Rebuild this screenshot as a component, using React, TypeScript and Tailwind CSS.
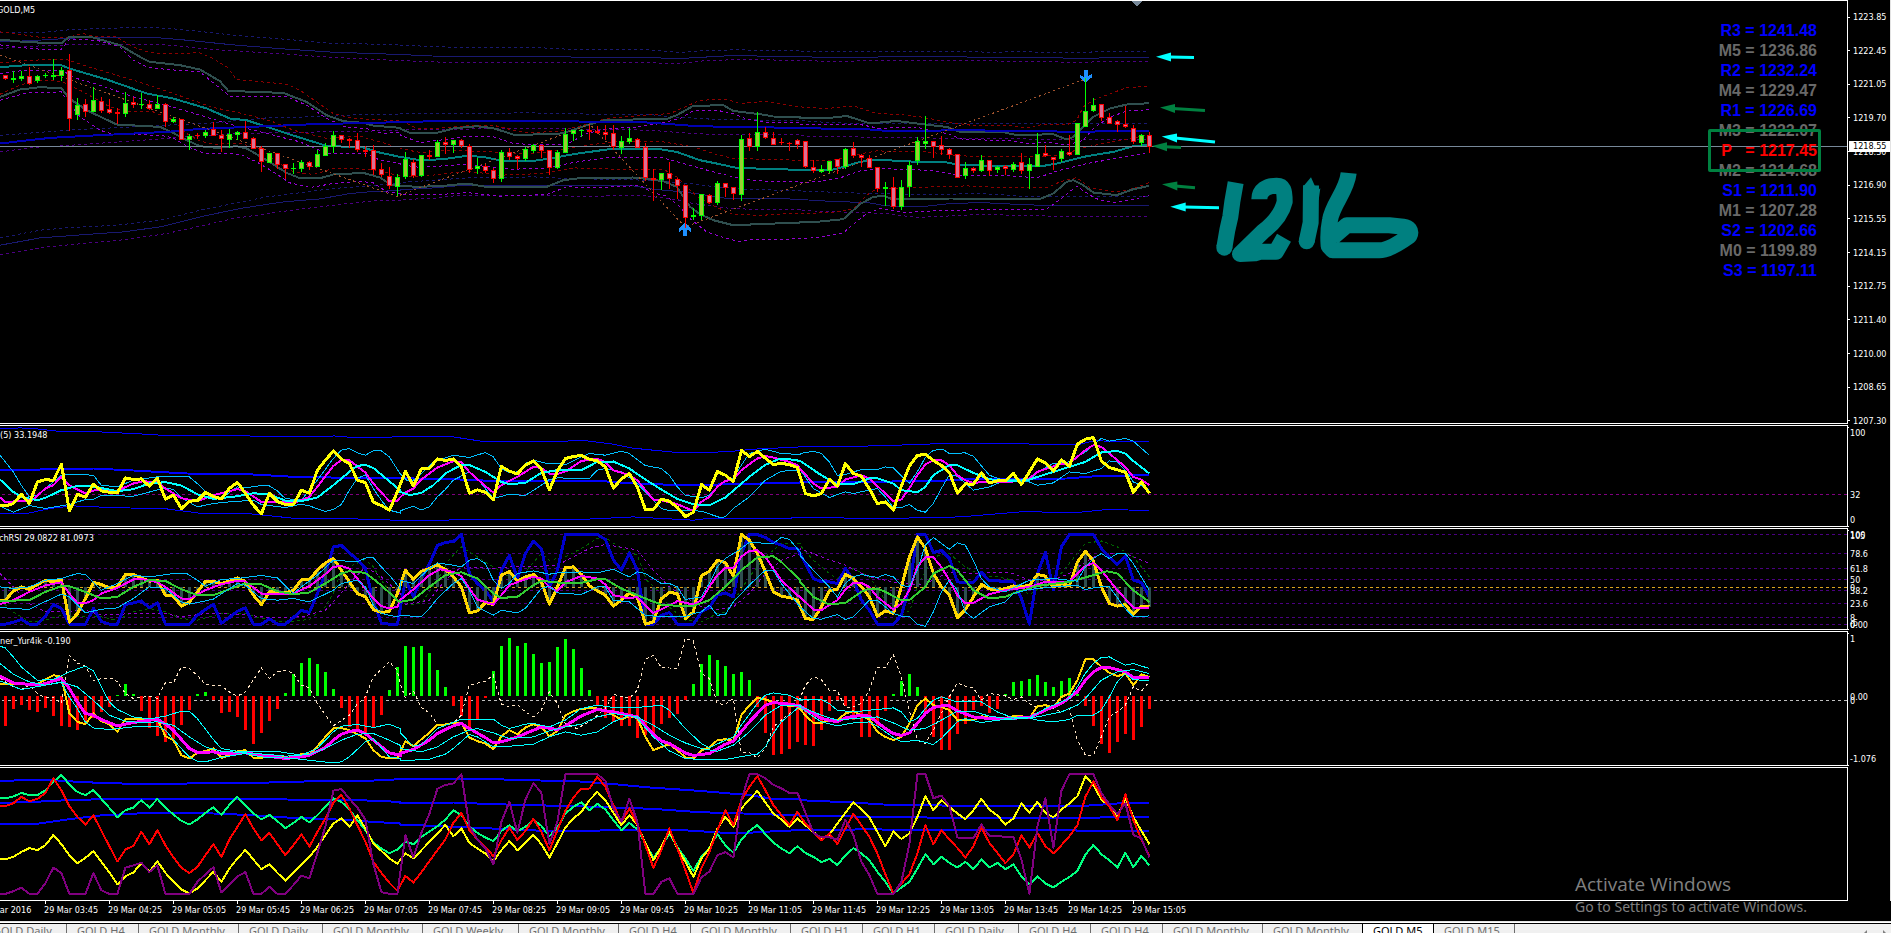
import type { ReactNode } from "react";

/* ------------------------------------------------------------------ data */

const BAR_STEP = 8;
const FIRST_BAR = 5;
const barX = (i: number) => FIRST_BAR + i * BAR_STEP;

/* Candles: direction, high, body top, body bottom, low. */
const CANDLES = `
r75,75,79,80 g71,78,80,83 g71,76,79,81 r67,76,84,85 g75,76,81,83 g73,75,76,78 g59,75,77,80 g67,70,76,81
r54,70,119,131 g98,105,115,120 r99,104,112,117 g87,100,112,112 r97,101,111,113 r99,109,113,114 r108,112,114,124
g92,103,114,117 r97,102,105,108 g93,104,105,109 r100,104,109,110 g95,104,109,109 r103,104,122,127 g117,119,122,123
r119,119,140,140 g134,136,140,150 r133,135,136,139 g130,132,136,138 r122,129,136,136 r130,135,139,152
g129,134,140,148 g131,132,135,140 r121,132,139,139 r137,138,149,149 r146,148,162,172 g153,153,163,163
r153,153,165,169 r164,164,169,179 g163,168,169,174 g160,162,169,172 r161,162,167,170 g150,154,167,167
g143,146,156,156 g131,135,147,153 r135,135,140,143 r138,139,141,148 r133,140,150,152 r146,150,152,157
r145,150,170,175 r163,169,175,177 r167,176,186,189 g174,177,187,196 g152,159,177,179 r159,162,176,178
g155,155,176,177 r150,155,157,160 g140,142,157,157 r137,142,145,154 g140,140,145,153 r139,140,146,148
r144,146,170,173 g158,166,169,174 r164,166,171,173 r168,170,179,183 g150,152,179,182 r148,152,157,160
r155,156,159,169 g147,149,159,161 g144,145,151,153 r145,145,151,158 r150,150,168,175 g150,152,168,169
g128,134,153,153 g130,130,134,141 g129,130,131,137 r125,130,132,140 r126,131,133,134 r125,132,135,140
r125,133,147,150 g136,141,148,154 g128,138,142,144 r138,139,148,148 r143,147,178,181 r169,178,180,201
g173,173,180,190 r162,173,179,189 r178,179,186,199 r185,185,218,228 g208,215,217,220 g194,194,216,220
r194,195,203,204 g181,183,203,205 r183,183,188,197 r187,187,194,200 g135,139,195,201 r133,138,147,151
g112,132,147,151 r127,132,138,139 r132,138,145,145 r138,142,143,145 r142,143,144,151 r139,140,145,149
r141,141,167,168 r160,167,171,173 g165,169,172,173 g161,161,171,173 r159,159,167,174 g148,149,167,169
r142,148,156,158 r154,155,158,167 r155,158,168,168 r167,167,189,192 g182,187,189,206 r177,187,207,209
g180,187,207,210 g161,165,187,197 g137,141,161,165 g116,141,144,149 r141,141,147,158 r136,145,150,155
r148,149,155,159 r154,154,178,178 g162,168,176,179 r167,168,171,173 g155,160,171,172 r160,160,171,176
g166,167,170,173 r165,166,169,175 g162,164,170,172 r153,162,171,174 g158,164,171,189 g133,154,167,167
r145,153,156,157 r157,157,160,170 g149,151,159,162 r135,152,155,156 g123,123,155,155 g78,111,127,127
g98,105,111,112 r104,104,118,121 r113,117,124,124 r120,121,125,132 r106,124,127,128 r125,128,142,144
g134,135,143,146 r132,135,147,153`
  .trim()
  .split(/\s+/)
  .map((c) => ({ up: c[0] === "g", v: c.slice(1).split(",").map(Number) }));

/* Per-bar series, in thirds of a pixel below the indicator origin. */
const nums = (s: string) => s.trim().split(/\s+/).map(Number);

const RSI = nums(`257 250 222 250 185 178 181 132 272 222 231 192 212 216 218 173 178 176 198 174 237 225 265 243 241 217 229 236 204 187 219 255 281 219 244 253 253 210 219 150 120 92 117 130 180 187 246 256 270 215
153 197 146 145 116 121 116 140 219 209 216 238 139 153 161 134 122 147 209 152 115 109 106 117 122 140 204 176 160 202 268 268 237 243 262 289 276 193 210 154 165 184 91 109 94 114 133 130 133 142
220 227 220 178 198 130 160 168 206 250 245 270 197 137 106 102 121 136 157 219 191 192 158 188 182 182 160 193 155 116 128 153 119 138 72 57 52 122 142 149 156 216 185 220`);

const STOCH = nums(`612 606 598 612 612 588 553 565 612 612 612 565 604 612 612 553 548 542 563 548 612 612 612 612 585 568 552 609 592 573 563 612 612 596 612 612 592 571 577 520 460 380 376 398 418 445 545 608 612 612
480 530 475 432 376 367 364 343 460 490 510 545 450 405 475 400 363 385 500 450 343 343 343 343 343 358 420 450 398 450 612 612 585 577 612 612 612 575 562 525 518 530 400 343 343 352 367 375 385 385
430 475 485 485 490 445 480 540 570 612 612 612 585 500 343 343 397 391 415 485 487 487 456 482 482 484 484 535 612 460 397 508 380 343 343 343 343 385 411 433 408 480 487 530`);

const STOCH_GOLD = nums(`540 512 500 507 493 480 485 478 606 580 535 487 493 503 500 463 463 473 483 480 525 528 558 545 515 483 484 490 483 473 484 525 553 515 515 518 510 479 478 450 428 415 450 485 520 530 568 577 574 520
450 478 453 445 434 448 470 500 578 572 547 553 465 454 483 470 463 485 552 500 442 440 463 497 512 525 558 540 518 532 612 605 535 517 520 595 575 467 453 420 427 468 343 360 400 455 515 528 532 540
595 598 560 512 507 463 475 500 530 588 572 580 500 410 350 385 460 500 525 592 568 530 493 506 510 505 497 500 495 463 468 500 490 497 425 393 422 500 550 558 553 583 558 560`);

const HISTOGRAM = nums(`918 867 855 870 876 864 888 918 921 930 909 893 876 861 825 792 822 873 924 948 966 957 915 870 822 816 840 879 876 891 930 972 939 903 867 819 762 729 714 732 756 807 864 921 930 939 921 885 810 741
678 681 678 699 750 801 858 888 921 900 834 753 678 654 678 669 702 729 726 681 657 687 744 810 855 894 906 918 918 954 945 939 912 894 882 840 792 732 705 720 738 762 756 780 861 939 1005 1002 987 966
975 978 930 873 840 858 900 951 951 918 873 822 783 762 801 880 951 990 990 942 912 870 858 879 867 822 786 783 777 765 786 801 783 774 822 858 918 972 999 966 942 960 921 867`);

const SIGNAL_GOLD = nums(`792 792 792 792 792 778 765 770 880 905 912 880 903 912 935 897 895 895 902 897 948 960 1005 1015 998 992 985 1013 1005 993 990 1013 1013 1005 1008 1013 1010 1002 1002 978 950 925 924 930 942 955 990 1010 1014 1014
963 978 957 938 913 913 908 908 952 963 970 987 948 930 942 922 912 920 948 932 885 873 866 864 865 870 885 898 888 893 950 990 980 972 990 1012 1014 990 982 960 957 962 885 855 833 838 846 853 857 858
885 908 908 900 900 880 873 885 898 935 950 960 950 910 855 835 855 860 870 900 900 900 888 893 893 893 888 888 895 858 855 862 830 820 780 717 717 740 758 768 760 795 762 770`);

const OSC_GREEN = nums(`1134 1129 1118 1125 1125 1110 1085 1064 1093 1115 1125 1109 1136 1163 1191 1170 1162 1140 1162 1136 1162 1183 1202 1213 1198 1178 1161 1184 1154 1130 1155 1179 1198 1184 1203 1224 1208 1190 1207 1185 1160 1135 1145 1168 1200 1230 1267 1285 1299 1288
1263 1272 1250 1234 1218 1198 1170 1185 1218 1238 1252 1263 1232 1215 1233 1220 1198 1217 1248 1222 1180 1160 1146 1170 1151 1168 1200 1230 1208 1228 1270 1313 1280 1240 1280 1315 1352 1310 1283 1242 1275 1298 1258 1232 1214 1242 1267 1285 1299 1278
1298 1310 1326 1316 1335 1305 1284 1300 1320 1355 1385 1420 1402 1385 1345 1302 1332 1310 1328 1342 1325 1347 1318 1342 1328 1347 1333 1368 1392 1368 1390 1402 1385 1370 1352 1303 1274 1302 1320 1342 1298 1341 1307 1336`);

const OSC_RED = nums(`1158 1149 1130 1143 1136 1118 1074 1110 1158 1190 1213 1185 1232 1278 1324 1288 1277 1235 1272 1230 1275 1311 1343 1358 1340 1305 1272 1310 1258 1220 1182 1225 1260 1238 1272 1305 1275 1243 1279 1235 1195 1148 1124 1165 1215 1265 1325 1358 1388 1412
1367 1387 1356 1323 1290 1258 1208 1178 1230 1258 1280 1308 1260 1222 1260 1232 1196 1235 1290 1230 1172 1132 1105 1105 1070 1100 1155 1205 1165 1212 1275 1343 1290 1225 1285 1350 1418 1345 1295 1230 1170 1215 1140 1100 1068 1110 1155 1185 1215 1175
1210 1235 1260 1240 1272 1225 1181 1215 1250 1300 1362 1420 1390 1362 1300 1215 1272 1230 1258 1283 1312 1278 1222 1268 1298 1329 1303 1245 1282 1238 1278 1299 1275 1248 1215 1130 1083 1130 1160 1200 1122 1200 1258 1308`);

const OSC_YELLOW = nums(`1317 1310 1295 1284 1290 1275 1244 1272 1305 1329 1313 1293 1325 1357 1392 1368 1357 1328 1355 1323 1358 1383 1408 1420 1405 1380 1355 1385 1345 1315 1289 1318 1347 1332 1358 1381 1357 1333 1310 1280 1245 1210 1194 1220 1186 1225 1270 1292 1315 1330
1300 1314 1290 1265 1240 1214 1248 1225 1268 1285 1300 1323 1290 1262 1290 1268 1244 1272 1312 1268 1222 1195 1175 1140 1115 1140 1178 1215 1185 1215 1268 1320 1280 1232 1285 1325 1370 1315 1285 1225 1190 1220 1165 1138 1112 1147 1180 1198 1220 1195
1215 1235 1255 1243 1210 1178 1146 1168 1192 1235 1278 1234 1256 1240 1190 1128 1170 1140 1160 1180 1197 1170 1136 1168 1186 1213 1195 1150 1177 1145 1178 1191 1168 1150 1128 1068 1095 1138 1158 1188 1135 1190 1232 1272`);

const OSC_PURPLE = STOCH.map((v) => 1062 + (v - 343) * 1.3346);

/* Curves are sampled in three 400px windows, in thirds of a pixel. */
type Curve = [string, string, string];

const PRICE_CURVES: { color: string; width?: number; dash?: boolean; d: Curve }[] = [
  { color: "#191970", dash: true, d: ["0,97 130,97 190,90 290,85 420,82 500,84 600,94 700,105 830,115 1000,130 1200,133", "0,135 150,141 430,143 520,148 750,149 840,157 920,151 1000,149 1200,151", "0,154 530,154 560,157 650,154 740,157 850,157 900,154 1048,154"] },
  { color: "#191970", d: ["0,124 80,122 150,118 230,113 480,113 560,120 700,134 850,146 1000,156 1200,163", "0,163 130,169 480,170 770,173 840,175 1000,166 1200,170", "0,170 200,172 270,169 440,169 560,172 770,173 880,175 900,173 1048,172"] },
  { color: "#4b0082", dash: true, d: ["0,145 100,138 200,134 500,134 640,148 830,160 1000,172 1200,181", "0,181 150,187 500,188 750,188 840,190 920,181 1040,178 1200,181", "0,181 100,184 240,181 480,181 700,184 850,187 900,184 1048,184"] },
  { color: "#191970", dash: true, d: ["0,406 200,390 480,376 640,368 800,353 1000,348 1060,344 1200,344", "0,340 400,338 440,340 760,344 820,350 950,358 1200,361", "0,361 100,368 400,371 1048,371"] },
  { color: "#4b0082", dash: true, d: ["0,455 100,442 200,436 400,422 560,410 700,400 1200,391", "0,388 440,385 640,388 750,390 850,398 950,403 1200,404", "0,407 250,412 450,414 600,416 1048,418"] },
  { color: "#191970", dash: true, d: ["0,713 120,690 200,683 350,675 480,660 600,630 700,610 800,590 1000,565 1200,550", "0,547 200,533 400,530 500,535 740,540 850,548 950,560 1040,568 1200,571", "0,572 200,580 400,583 540,580 700,590 1048,590"] },
  { color: "#191970", d: ["0,735 120,713 300,700 370,695 480,680 600,650 720,625 850,605 960,596 1050,580 1120,574 1200,571", "0,568 80,565 170,557 700,557 760,567 850,575 900,582 980,595 1140,595 1200,598", "0,598 100,604 200,607 260,617 360,620 440,611 540,607 640,612 740,616 1048,616"] },
  { color: "#4b0082", dash: true, d: ["0,763 140,740 380,718 500,700 600,678 700,655 860,632 1000,615 1120,602 1200,601", "0,598 100,595 180,585 480,585 550,590 620,587 740,587 840,600 880,610 1000,626 1200,628", "0,631 260,640 350,652 540,643 740,647 760,649 1048,649"] },
  { color: "#8b0000", dash: true, d: ["0,95 60,102 130,113 200,112 250,100 280,108 350,110 400,140 440,155 480,160 600,158 640,175 680,200 710,238 860,252 900,270 950,305 1000,340 1060,355 1200,362", "0,363 20,370 50,385 100,385 180,378 280,375 340,390 380,398 480,393 560,372 620,355 700,348 810,340 860,318 900,300 980,298 1020,310 1100,303 1200,320", "0,320 80,325 160,317 230,340 300,343 360,350 460,368 520,376 620,376 690,383 720,374 800,374 830,360 850,320 880,300 980,262 1048,259"] },
  { color: "#8b0000", dash: true, d: ["0,188 80,180 200,178 260,198 400,240 520,280 640,322 740,343 820,365 880,390 980,415 1080,408 1140,425 1200,443", "0,445 60,457 150,450 280,455 370,460 440,457 550,437 640,425 790,425 880,440 940,460 1000,475 1200,480", "0,481 100,480 160,465 230,452 380,455 480,467 640,470 700,470 780,465 860,440 960,420 1048,404"] },
  { color: "#8b0000", dash: true, d: ["0,282 60,255 110,241 184,243 250,275 330,320 380,335 460,335 520,360 560,400 600,423 640,432 720,430 780,445 830,485 880,515 940,523 1000,505 1080,506 1120,508 1200,527", "0,528 80,527 200,513 300,525 430,520 520,503 650,507 790,507 830,530 870,570 900,595 950,622 1000,642 1080,646 1160,640 1200,641", "0,640 100,637 160,625 200,585 230,565 320,563 400,560 500,557 600,562 740,563 780,545 830,532 870,563 950,575 1000,565 1048,547"] },
  { color: "#9400d3", dash: true, d: ["0,134 60,142 130,148 184,148 208,118 290,120 360,140 400,180 440,200 500,208 600,215 640,248 690,288 860,290 920,315 980,355 1040,382 1100,385 1150,400 1200,396", "0,405 60,427 120,420 190,410 280,410 340,430 400,433 500,432 560,400 620,385 700,382 780,370 840,355 880,332 960,332 1000,340 1040,357 1100,367 1200,367", "0,373 180,373 240,385 340,380 380,387 440,400 490,418 620,421 690,430 740,425 800,435 850,420 880,385 930,350 980,333 1048,328"] },
  { color: "#9400d3", dash: true, d: ["0,220 60,212 184,210 230,235 300,255 400,290 500,315 600,345 700,375 800,400 900,425 980,460 1100,460 1140,480 1200,490", "0,493 60,502 200,492 330,507 430,505 520,487 620,472 790,473 860,493 940,515 1020,535 1100,544 1200,544", "0,548 60,543 120,533 180,512 240,505 400,511 480,525 620,526 710,533 780,510 860,490 960,473 1048,458"] },
  { color: "#9400d3", dash: true, d: ["0,300 80,278 184,275 208,310 240,350 300,390 340,403 480,405 520,413 560,438 610,458 720,462 770,485 820,515 870,548 930,562 1000,550 1080,543 1120,548 1160,575 1200,580", "0,583 120,583 200,577 300,588 440,583 500,560 600,562 720,556 760,578 800,588 840,620 870,655 920,695 980,715 1020,724 1060,718 1200,716", "0,716 60,711 130,698 160,672 200,640 240,625 320,637 430,630 700,628 740,627 790,590 830,558 870,585 900,600 950,607 1000,598 1048,586"] },
  { color: "#2f4f4f", width: 2, d: ["0,118 80,126 184,129 208,110 280,112 360,135 420,170 450,185 540,195 600,208 660,243 685,272 850,278 920,305 980,345 1030,363 1090,368 1120,376 1200,383", "0,385 30,398 110,398 160,385 230,378 280,384 340,403 400,403 480,400 500,395 560,375 620,358 700,358 800,356 830,345 880,317 970,315 1000,332 1080,342 1120,349 1200,351", "0,352 100,352 140,347 210,370 290,362 350,370 440,380 480,395 610,396 650,405 760,402 800,418 820,410 850,380 880,350 930,325 980,313 1048,309"] },
  { color: "#2f4f4f", width: 2, d: ["0,290 60,268 120,261 184,264 208,295 260,330 350,373 480,380 520,398 560,420 600,438 650,443 710,438 740,445 800,480 860,518 900,534 960,534 1000,523 1090,518 1140,532 1170,552 1200,556", "0,556 50,560 130,557 200,550 270,562 440,560 490,540 540,534 700,532 730,535 790,543 830,560 870,620 900,642 940,660 1000,675 1200,667", "0,666 60,664 130,657 180,612 220,590 250,587 280,598 450,595 720,596 760,580 800,545 820,540 850,555 880,577 950,585 1000,567 1048,557"] },
  { color: "#008080", width: 2, d: ["0,201 90,194 184,195 208,205 320,238 440,280 520,295 620,325 690,355 740,360 860,400 980,437 1090,442 1130,455 1200,470", "0,470 60,480 130,477 200,467 250,470 310,482 400,482 450,475 520,462 620,448 680,446 780,447 830,455 900,480 960,492 1010,503 1200,509", "0,510 100,508 130,500 180,485 240,478 300,483 440,487 480,495 720,499 770,490 860,468 940,455 1000,438 1048,434"] },
  { color: "#0000b4", width: 2, d: ["0,430 60,423 150,413 280,406 500,395 600,386 800,378 940,372 1200,366", "0,366 100,363 510,363 600,366 660,365 740,367 840,374 890,378 1000,380 1200,383", "0,384 200,387 260,392 400,392 440,390 700,392 850,396 900,393 1048,393"] },
];

const RSI_CURVES: typeof PRICE_CURVES = [
  { color: "#0000ff", d: ["0,26 60,23 100,25 180,34 300,35 420,41 520,47 740,47 840,50 980,50 1000,47 1060,52 1200,50", "0,50 160,50 250,64 560,62 640,72 700,84 830,97 980,95 1060,87 1200,80", "0,79 250,77 340,73 400,71 600,71 840,72 880,62 1048,64"] },
  { color: "#0000ff", width: 2, d: ["0,150 100,150 150,145 280,145 400,151 560,160 760,163 900,171 1200,174", "0,174 180,178 250,181 580,181 700,190 850,195 1000,192 1200,187", "0,186 400,183 500,177 800,175 900,167 1048,165"] },
  { color: "#0000ff", d: ["0,279 80,280 150,265 220,257 330,262 500,266 600,279 740,280 880,294 1120,297 1200,301", "0,301 180,299 560,297 700,290 880,300 920,295 1150,295 1200,292", "0,292 260,295 480,290 660,275 840,276 920,268 1048,271"] },
  { color: "#00bfff", d: ["0,105 40,155 64,195 88,230 112,225 136,205 184,165 208,162 280,165 304,195 352,200 400,180 472,170 568,170 592,190 640,235 664,235 712,200 736,203 784,196 808,197 832,212 856,235 904,240 952,180 1000,115 1024,90 1048,85 1072,98 1096,105 1120,92 1144,92 1168,110 1200,160", "0,160 20,180 40,180 64,160 100,125 160,105 208,112 256,97 280,110 304,145 328,158 352,155 376,130 400,120 440,130 500,132 544,110 568,100 616,105 664,93 688,100 736,136 784,145 808,165 832,200 856,225 904,233 928,225 952,200 976,183 1000,175 1024,135 1048,100 1096,87 1144,100 1200,103", "0,100 40,93 64,100 88,125 112,165 136,163 184,148 232,148 256,140 280,143 328,190 352,155 376,112 400,90 430,88 448,100 496,98 520,108 568,165 600,177 688,180 712,155 760,130 808,125 856,95 904,55 928,63 976,55 1000,63 1048,105"] },
  { color: "#00bfff", d: ["0,258 40,276 88,256 136,265 208,253 256,238 280,238 304,226 400,228 496,203 520,208 544,232 592,260 640,250 688,245 760,240 784,253 856,262 904,252 928,257 976,274 1000,268 1024,253 1048,210 1072,175 1096,164 1120,205 1144,240 1168,270 1200,278", "0,272 40,258 64,269 88,260 112,230 136,208 160,180 208,155 232,175 256,205 280,235 328,222 376,226 424,195 448,178 472,173 568,175 592,150 616,145 664,155 712,190 760,240 784,265 808,271 856,270 904,273 960,292 976,290 1000,265 1048,230 1096,180 1144,153 1200,150", "0,148 40,205 88,232 136,215 160,220 232,205 256,230 280,262 304,262 328,253 352,270 376,276 400,250 424,205 448,165 472,168 520,210 568,200 616,180 688,185 712,195 760,188 808,155 856,160 904,145 928,122 952,125 976,150 1000,185 1048,208"] },
  { color: "#ff00ff", width: 2, d: ["0,232 16,246 40,244 75,242 100,238 136,205 160,195 184,170 208,195 256,220 290,208 352,212 400,190 430,183 472,187 496,205 544,234 592,243 640,225 712,207 736,212 784,245 832,244 880,250 928,230 952,200 1000,137 1024,120 1048,120 1096,157 1120,190 1168,243 1192,242", "0,232 16,217 40,205 64,178 112,142 160,123 184,126 208,155 256,198 280,217 304,195 328,182 352,170 400,140 424,143 448,160 472,162 500,152 544,122 592,116 616,125 640,150 688,165 712,180 760,238 784,240 832,252 880,272 904,245 928,230 952,200 976,182 1000,178 1024,150 1072,115 1100,108 1120,112 1168,125 1192,135", "0,145 40,190 64,205 112,200 136,178 184,165 208,175 256,220 280,243 304,238 328,205 352,165 376,133 400,120 424,120 448,135 472,165 496,180 520,188 568,184 640,184 688,175 712,155 784,130 808,130 856,90 880,75 904,80 928,100 976,140 1000,170 1024,178 1048,195"] },
  { color: "#00ffff", width: 2, d: ["0,178 40,215 64,230 112,240 136,233 184,210 232,197 280,199 352,213 400,207 448,190 496,186 544,196 592,222 640,236 712,228 760,219 808,223 856,241 904,243 952,232 1000,195 1048,155 1072,137 1096,134 1120,143 1168,183 1200,210", "0,215 30,225 64,218 100,195 136,160 184,134 208,134 256,155 304,185 328,192 376,188 424,158 472,150 544,150 592,125 640,124 688,145 736,178 784,208 832,236 880,252 928,255 976,232 1048,170 1096,134 1136,117 1168,117 1200,122", "0,122 64,165 112,193 160,192 208,175 232,174 280,190 304,210 352,216 376,200 400,165 448,135 472,135 520,158 568,177 640,184 688,178 760,155 856,125 904,97 952,92 976,100 1000,122 1048,160"] },
];

const STOCH_UNDER: typeof PRICE_CURVES = [
  { color: "#006400", dash: true, d: ["0,540 40,575 88,605 136,600 184,585 232,590 304,590 352,600 400,575 448,565 496,575 544,595 592,600 664,580 736,580 784,595 856,605 928,598 976,560 1000,520 1024,450 1096,418 1120,440 1144,480 1200,555", "0,555 64,550 112,480 150,415 184,380 232,410 280,440 328,470 376,455 424,400 448,420 496,410 544,385 592,355 616,352 664,385 712,405 740,480 784,520 808,560 856,600 904,605 952,580 976,575 1000,545 1048,470 1096,410 1144,370 1200,370", "0,375 40,420 88,460 112,475 160,445 208,470 256,540 300,590 330,570 352,500 400,410 448,400 496,440 544,465 592,470 640,480 688,525 736,490 784,460 832,400 856,370 904,362 952,380 1000,410 1048,470"] },
  { color: "#9400d3", dash: true, d: ["0,460 40,500 88,550 136,575 184,575 256,570 304,585 400,580 496,580 544,590 616,580 712,582 808,592 904,590 976,570 1000,545 1048,490 1096,440 1144,470 1200,520", "0,555 88,540 136,480 184,440 280,445 328,440 400,440 472,435 520,410 568,385 616,373 688,385 712,390 760,450 808,500 856,530 904,560 952,568 1000,560 1048,520 1096,460 1144,420 1200,400", "0,385 64,410 136,435 208,470 280,485 352,495 400,480 448,455 520,460 592,455 640,460 688,480 760,480 808,460 856,425 904,400 976,400 1048,430"] },
];

const STOCH_OVER: typeof PRICE_CURVES = [
  { color: "#ff00ff", width: 2, d: ["0,552 40,540 88,515 136,496 184,486 208,520 232,548 256,549 280,540 304,520 352,503 400,478 424,476 472,486 496,500 544,535 568,536 616,510 664,492 712,482 736,484 784,520 832,522 880,520 928,498 976,462 1000,440 1024,437 1048,445 1096,505 1120,535 1144,557 1168,565 1192,560", "0,540 40,508 88,465 120,447 160,455 184,468 208,505 232,538 280,553 304,525 328,495 376,477 400,470 424,475 448,500 472,513 496,487 544,467 592,475 616,493 640,525 688,535 712,530 760,578 784,568 832,543 880,553 904,540 928,500 952,465 976,443 1000,443 1024,410 1048,392 1072,390 1096,410 1144,480 1192,525", "0,530 40,568 64,570 112,540 136,508 160,488 184,488 208,500 232,530 280,568 304,550 328,510 352,440 376,411 400,411 424,440 448,480 472,525 496,548 520,548 568,522 616,510 688,500 736,485 808,485 832,460 856,438 880,428 904,450 952,510 1000,562 1048,565"] },
  { color: "#32cd32", width: 2, d: ["0,542 88,540 136,515 184,498 208,498 256,515 304,535 352,530 400,500 448,480 496,482 544,507 592,525 640,525 688,507 736,490 784,492 832,513 880,522 928,517 976,490 1024,460 1048,453 1096,458 1144,495 1192,540", "0,545 40,538 88,500 136,465 184,456 232,475 280,520 304,533 352,530 400,495 424,482 496,489 544,488 592,477 616,477 664,505 736,535 784,553 832,557 880,557 928,540 976,500 1024,450 1072,412 1120,408 1144,425 1200,480", "0,485 40,530 88,553 136,548 184,515 208,505 232,505 256,515 304,540 328,540 376,500 400,460 448,437 472,450 520,510 568,535 616,530 640,520 712,497 808,485 880,465 920,453 952,460 1000,510 1048,545"] },
  { color: "#00bfff", d: ["0,500 40,505 88,500 136,480 184,475 232,460 256,463 304,510 352,490 400,465 448,470 520,460 560,460 592,480 616,498 664,478 712,475 784,466 832,473 880,520 904,500 952,465 1000,420 1072,425 1100,412 1120,412 1144,440 1168,465 1200,505", "0,480 40,490 88,445 112,428 160,435 184,440 208,420 232,415 256,430 280,480 304,505 328,490 352,460 400,452 448,462 472,458 544,455 592,458 640,447 688,470 712,455 736,460 784,490 808,490 832,500 856,538 904,530 928,490 952,440 976,415 1024,385 1048,367 1120,370 1144,352 1168,357 1200,395", "0,405 40,450 88,500 112,530 136,490 160,470 184,463 232,472 256,463 280,470 304,495 328,500 352,450 376,375 400,352 448,387 472,368 496,375 520,420 544,475 568,500 616,515 688,480 760,475 832,483 856,440 880,415 904,400 928,415 952,400 976,400 1000,430 1048,510"] },
  { color: "#00bfff", d: ["0,562 88,568 112,555 184,522 208,530 256,578 304,567 352,563 400,535 448,500 496,505 544,545 568,552 640,537 712,490 736,495 784,535 832,540 880,535 928,545 1000,510 1024,490 1072,480 1096,500 1120,555 1144,580 1192,590", "0,585 64,590 88,565 112,535 160,490 184,475 208,510 232,560 280,585 304,570 352,578 376,565 424,505 448,498 472,518 544,523 592,500 616,500 640,540 688,545 736,585 784,590 856,590 880,580 904,575 928,555 952,585 976,583 1000,545 1048,495 1096,450 1120,450 1144,490 1200,560", "0,560 40,595 64,597 112,583 136,598 160,590 208,540 232,540 280,580 304,588 328,588 352,612 376,619 400,575 424,515 448,480 472,510 496,575 520,595 568,560 616,545 640,520 688,508 760,500 832,495 856,508 880,503 904,500 928,500 976,565 1000,590 1048,587"] },
];

const SIGNAL_UNDER: typeof PRICE_CURVES = [
  { color: "#ffe4c4", dash: true, d: ["0,775 40,800 64,808 88,795 112,820 136,832 160,832 184,850 208,705 232,728 256,738 280,782 304,775 340,775 352,785 376,820 400,835 424,832 448,828 472,835 496,788 520,788 544,740 568,745 592,765 616,793 664,797 688,815 712,828 736,815 760,780 784,743 808,775 832,755 856,750 880,760 904,795 928,803 952,850 1000,917 1048,885 1072,852 1096,830 1120,770 1168,725 1192,750", "0,790 16,832 40,812 64,862 88,878 112,912 136,912 160,908 184,885 208,795 256,783 280,765 304,852 328,860 352,853 376,875 400,890 424,870 448,815 472,850 496,910 530,925 568,905 616,865 640,823 664,828 688,835 712,810 736,718 760,705 784,742 832,745 856,655 880,662 904,760 928,775 952,850 976,853 1000,835 1024,998 1048,997 1072,1013 1096,985 1120,920 1168,880 1192,865", "0,835 16,795 40,770 64,778 88,810 112,812 136,862 160,860 184,850 208,810 232,742 256,742 280,703 304,770 328,870 352,960 376,970 400,930 424,880 448,830 472,788 496,798 520,803 544,840 568,820 616,827 640,838 664,830 688,850 712,862 736,855 784,875 808,865 832,960 856,1004 880,1006 904,950 928,890 952,875 976,855 1000,800 1024,813 1048,785"] },
];

const SIGNAL_OVER: typeof PRICE_CURVES = [
  { color: "#ff00ff", width: 3, d: ["0,768 40,788 112,795 136,790 184,775 208,805 232,845 256,880 280,885 304,898 352,917 400,907 448,900 472,897 496,912 520,930 568,985 592,997 640,995 664,1000 736,998 784,1005 856,1015 904,1010 928,1005 976,982 1000,960 1024,942 1048,934 1072,930 1096,940 1120,960 1168,998 1200,1005", "0,1000 40,988 88,960 112,940 160,917 184,910 208,925 256,952 280,968 304,965 352,950 424,920 472,928 496,917 544,887 592,868 640,875 712,890 760,942 784,962 808,970 856,998 880,1006 928,1000 976,972 1000,963 1048,905 1096,855 1120,847 1168,852 1200,857", "0,858 40,880 64,895 112,905 136,893 184,885 208,888 256,925 280,940 304,946 328,938 352,910 376,880 400,862 424,857 448,857 472,872 520,890 568,895 616,895 688,892 736,870 784,850 832,815 856,780 880,755 904,742 928,742 976,755 1000,772 1048,772"] },
  { color: "#00ffff", d: ["0,730 40,762 88,785 136,795 184,785 232,800 280,840 328,885 376,903 424,907 472,905 520,915 568,950 616,980 664,993 736,998 808,1003 856,1008 928,1003 976,985 1024,960 1072,942 1120,940 1168,960 1200,975", "0,985 64,995 112,980 160,950 208,930 232,925 280,938 328,955 400,950 448,932 496,920 544,912 592,890 640,880 712,890 760,915 808,945 856,968 904,985 952,993 1000,975 1048,935 1096,885 1144,855 1200,855", "0,858 64,885 112,900 160,895 232,890 280,908 328,930 376,925 424,900 472,873 520,873 568,888 640,897 712,890 784,875 832,855 856,835 904,780 952,755 1000,748 1048,760"] },
  { color: "#00ffff", d: ["0,678 16,683 40,710 64,740 112,780 160,778 208,755 256,738 280,752 304,800 328,845 352,868 400,890 448,896 496,888 544,873 568,873 592,895 640,958 664,985 712,993 832,994 904,1005 952,985 1000,935 1024,918 1072,913 1120,922 1168,912 1200,925", "0,937 40,978 64,973 112,925 184,897 280,897 304,915 328,925 376,912 400,910 448,920 496,900 544,865 592,855 640,862 712,862 784,855 808,870 856,925 904,970 928,983 976,960 1000,950 1024,915 1072,850 1096,825 1120,818 1168,825 1200,840", "0,837 64,838 88,850 112,870 160,875 208,870 280,863 304,875 328,905 352,895 376,865 400,840 424,830 472,845 544,845 592,875 640,893 688,893 736,865 808,835 832,800 856,760 880,730 904,712 928,710 976,735 1000,730 1048,745"] },
  { color: "#00ffff", d: ["0,782 64,808 136,795 184,787 208,830 232,865 256,905 280,923 328,928 400,920 472,918 496,930 544,985 568,1010 592,1023 616,1025 664,1012 736,1000 784,1010 880,1015 952,1023 1000,1028 1024,1025 1048,1010 1096,965 1120,955 1168,1010 1200,1015", "0,1022 88,1017 136,1002 160,985 208,943 232,950 280,980 328,978 400,972 448,950 496,935 544,945 592,935 640,905 688,885 712,895 760,950 808,992 856,1015 904,1018 976,1018 1048,1005 1072,1002 1096,980 1120,940 1144,905 1200,858", "0,862 64,905 112,917 160,908 208,905 232,918 280,952 304,965 352,960 400,973 424,955 472,905 496,895 544,907 592,900 688,893 712,900 760,905 808,898 832,886 880,885 904,870 928,830 952,785 976,760 1000,778 1048,782"] },
];

const OSC_BANDS: typeof PRICE_CURVES = [
  { color: "#0000ff", width: 2, d: ["0,1083 60,1080 160,1080 250,1086 400,1091 560,1090 740,1088 860,1086 960,1082 1100,1082 1200,1077", "0,1077 280,1077 420,1081 540,1084 620,1090 750,1102 900,1112 1050,1125 1120,1136 1200,1138", "0,1140 160,1147 250,1153 400,1155 480,1158 850,1157 950,1150 1048,1149"] },
  { color: "#0000ff", width: 2, d: ["0,1148 100,1145 200,1140 340,1136 700,1136 860,1138 1100,1141 1200,1145", "0,1147 160,1147 280,1152 400,1155 600,1160 760,1166 900,1176 1030,1180 1200,1186", "0,1186 160,1189 380,1192 440,1194 860,1194 920,1191 1048,1191"] },
  { color: "#0000ff", width: 2, d: ["0,1213 110,1211 200,1198 300,1186 430,1179 640,1180 740,1184 880,1193 980,1196 1040,1200 1200,1210", "0,1213 100,1217 240,1223 380,1230 500,1234 600,1231 850,1230 960,1237 1060,1237 1140,1232 1200,1230", "0,1230 240,1227 260,1230 820,1230 860,1234 1048,1233"] },
];

const PIVOTS: [string, string, string][] = [
  ["R3", "1241.48", "text-[#0000ff]"],
  ["M5", "1236.86", "text-[#696969]"],
  ["R2", "1232.24", "text-[#0000ff]"],
  ["M4", "1229.47", "text-[#696969]"],
  ["R1", "1226.69", "text-[#0000ff]"],
  ["M3", "1222.07", "text-[#696969]"],
  ["P\u00a0\u00a0", "1217.45", "text-[#ff0000]"],
  ["M2", "1214.68", "text-[#696969]"],
  ["S1", "1211.90", "text-[#0000ff]"],
  ["M1", "1207.28", "text-[#696969]"],
  ["S2", "1202.66", "text-[#0000ff]"],
  ["M0", "1199.89", "text-[#696969]"],
  ["S3", "1197.11", "text-[#0000ff]"],
];

const PRICES = ["1223.85", "1222.45", "1221.05", "1219.70", "1218.30", "1216.90", "1215.55", "1214.15", "1212.75", "1211.40", "1210.00", "1208.65", "1207.30"];

const TIMES = ["2016", "03:45", "04:25", "05:05", "05:45", "06:25", "07:05", "07:45", "08:25", "09:05", "09:45", "10:25", "11:05", "11:45", "12:25", "13:05", "13:45", "14:25", "15:05"];

const TABS = ["Daily", "H4", "Monthly", "Daily", "Monthly", "Weekly", "Monthly", "H4", "Monthly", "H1", "H1", "Daily", "H4", "H4", "Monthly", "Monthly", "M5", "M15"];

const TAB_WIDTH: Record<string, string> = {
  Daily: "w-[84px]",
  H4: "w-[72px]",
  H1: "w-[72px]",
  M5: "w-[71px]",
  M15: "w-[81px]",
  Weekly: "w-[96px]",
  Monthly: "w-[100px]",
};

/* --------------------------------------------------------------- drawing */

const INDICATOR_ORIGIN = 420;

const curvePoints = (d: Curve, origin: number) =>
  d
    .flatMap((part, w) =>
      part.split(" ").map((p) => {
        const [x, y] = p.split(",").map(Number);
        return `${(w * 400 + x / 3).toFixed(1)},${(origin + y / 3 + 0.2).toFixed(1)}`;
      }),
    )
    .join(" ");

function Curves({ list, origin = INDICATOR_ORIGIN }: { list: typeof PRICE_CURVES; origin?: number }) {
  return (
    <>
      {list.map((c, i) => (
        <polyline key={i} points={curvePoints(c.d, origin)} fill="none" stroke={c.color} strokeWidth={c.width ?? 1} strokeDasharray={c.dash ? "3 3" : undefined} />
      ))}
    </>
  );
}

function Series({ values, color, width = 2 }: { values: number[]; color: string; width?: number }) {
  const pts = values.map((v, i) => `${barX(i) + 0.4},${(INDICATOR_ORIGIN + v / 3 + 0.2).toFixed(1)}`);
  const first = (INDICATOR_ORIGIN + values[0] / 3 + 0.2).toFixed(1);
  return <polyline points={`0,${first} ${pts.join(" ")}`} fill="none" stroke={color} strokeWidth={width} strokeLinejoin="round" />;
}

function Level({ y, color }: { y: number; color: string }) {
  return <line x1="2" x2="100%" y1={y + 0.5} y2={y + 0.5} stroke={color} strokeDasharray="3 3" />;
}

function Pointer({ tip, head, tail, color }: { tip: [number, number]; head: [number, number]; tail: [number, number]; color: string }) {
  return (
    <g fill={color} stroke={color}>
      <path d={`M${tip[0]} ${tip[1]}L${head[0]} ${head[1] - 4.5}V${head[1] + 4.5}Z`} strokeWidth="0" />
      <path d={`M${head[0] - 2} ${head[1]}L${tail[0]} ${tail[1]}`} strokeWidth="3" />
    </g>
  );
}

/* ---------------------------------------------------------------- layout */

function Panel({ size, top, title, axis, overlay, label, children }: { size: string; top: number; title?: ReactNode; axis?: ReactNode; overlay?: ReactNode; label: string; children: ReactNode }) {
  return (
    <section aria-label={label} className={`flex shrink-0 ${size}`}>
      <div className="relative min-w-0 flex-1 overflow-hidden border-y border-r border-white">
        <svg className="absolute inset-0 h-full w-full" shapeRendering="crispEdges" aria-hidden="true">
          <g transform={`translate(0 ${-(top + 1)})`}>{children}</g>
        </svg>
        {title}
        {overlay}
      </div>
      <div className="relative w-[42px] shrink-0">{axis}</div>
    </section>
  );
}

function Caption({ children, shift = "ml-0" }: { children: ReactNode; shift?: string }) {
  return <h2 className={`relative pt-[3px] leading-3 whitespace-pre ${shift}`}>{children}</h2>;
}

function Mark({ at, children }: { at: string; children: ReactNode }) {
  return <span className={`absolute left-0.5 leading-3 ${at}`}>{children}</span>;
}

function EdgeTicks() {
  return (
    <>
      <i className="absolute top-0.5 left-0 h-px w-px bg-white" />
      <i className="absolute bottom-0 left-0 h-px w-px bg-white" />
    </>
  );
}

export default function App() {
  return (
    <main className="relative flex h-screen flex-col overflow-hidden bg-black font-['DejaVu_Sans_Condensed','DejaVu_Sans',sans-serif] text-[9px] text-white">
      <div className="flex shrink-0 flex-col gap-px border-r border-[#e3e3e3]">
        <Panel
          label="Gold price"
          size="h-[424px]"
          top={0}
          title={<Caption shift="-ml-[3px]">GOLD,M5</Caption>}
          overlay={
            <>
              <ul className="absolute top-5 right-[30px] text-right font-['Liberation_Sans',Arial,sans-serif] text-base leading-5 font-bold">
                {PIVOTS.map(([name, value, tone]) => (
                  <li key={name} className={tone}>
                    {name} = {value}
                  </li>
                ))}
              </ul>
              <div className="absolute top-[128px] right-[26px] h-[43px] w-[113px] rounded-xs border-3 border-[#008040]" />
            </>
          }
          axis={
            <>
              <ol className="flex h-[427px] flex-col justify-between pt-[11px]">
                {PRICES.map((p) => (
                  <li key={p} className="flex items-center gap-[3px] leading-3 before:h-px before:w-0.5 before:bg-white">
                    {p}
                  </li>
                ))}
              </ol>
              <strong className="absolute top-[141px] right-0 left-px bg-white pl-1 leading-[11px] font-normal text-black">1218.55</strong>
            </>
          }
        >
          <Curves list={PRICE_CURVES} origin={0} />
          <path d="M0 55L397 196.5L403 194L590 124.3L685 227L1085.5 79" fill="none" stroke="#a0522d" strokeDasharray="2 3" />
          <line x1="0" x2="100%" y1="146.5" y2="146.5" stroke="#778899" />
          {CANDLES.map(({ up, v: [high, top, bottom, low] }, i) => {
            const edge = up ? "#00ff00" : "#ff0000";
            const h = Math.max(bottom - top, 1);
            return (
              <g key={i}>
                <rect x={barX(i)} y={high} width="1" height={Math.max(low - high, 1)} fill={edge} />
                <rect x={barX(i) - 2} y={top} width="5" height={h} fill={edge} />
                {h > 2 && <rect x={barX(i) - 1} y={top + 1} width="3" height={h - 2} fill={up ? "#9acd32" : "#db7093"} />}
              </g>
            );
          })}
          <path d="M1131 1H1142L1136.500 6.500Z" fill="#778899" />
          <g fill="#1e90ff">
            <path d="M685 222.500L691 228V232L687 229.500V236H683V229.500L679 232V228Z" />
            <path d="M1085.500 83L1091.500 77.500V74L1087.500 77V70H1083.500V77L1079.500 74V77.500Z" />
          </g>
          <rect x="1085" y="78" width="1" height="10" fill="#00ff00" />
          <rect x="685" y="220" width="1" height="8" fill="#ff0000" />
          <g shapeRendering="auto">
            <Pointer color="#00ffff" tip={[1156, 56.7]} head={[1171, 57]} tail={[1194, 57.5]} />
            <Pointer color="#008040" tip={[1160, 107.5]} head={[1175, 108.5]} tail={[1205, 110.5]} />
            <Pointer color="#00ffff" tip={[1161.7, 136.5]} head={[1177, 138]} tail={[1215, 142]} />
            <Pointer color="#008040" tip={[1152, 146]} head={[1167, 146.7]} tail={[1181, 147.5]} />
            <Pointer color="#008040" tip={[1162, 184.3]} head={[1177.3, 186]} tail={[1195, 187.7]} />
            <Pointer color="#00ffff" tip={[1170.3, 206.7]} head={[1185.7, 207]} tail={[1219, 207.7]} />
            {/* Freehand brush marks */}
            <g transform="translate(1140 0) scale(0.33333)" fill="none" stroke="#008080" strokeWidth="48" strokeLinejoin="round">
              <path d="M287 548L277 605L271 650L262 690L253 743" />
              <path d="M358 598C358 570 380 557 410 557C430 557 434 570 434 605C426 640 398 672 370 694L300 762L345 760L362 755H408L432 713" />
              <path d="M513 556L512 668L500 724" />
              <path d="M626 519C620 575 578 610 570 660C562 700 565 720 566 738L578 751H718C745 751 780 728 808 708C816 692 806 682 790 680L748 676H620L578 712" />
              <g fill="#008080" stroke="none">
                <circle cx="253" cy="743" r="24" />
                <circle cx="500" cy="724" r="24" />
                <path d="M489 560L513 532L531 572L541 565L536 600Z" />
              </g>
            </g>
          </g>
        </Panel>

        <Panel
          label="RSI"
          size="h-[102px]"
          top={425}
          title={<Caption>(5) 33.1948</Caption>}
          axis={
            <>
              <EdgeTicks />
              <Mark at="top-0.5">100</Mark>
              <Mark at="top-16">32</Mark>
              <Mark at="top-[89px]">0</Mark>
            </>
          }
        >
          <Level y={494} color="#800080" />
          <Curves list={RSI_CURVES} />
          <Series values={RSI} color="#ffff00" width={3} />
        </Panel>

        <Panel
          label="Stochastic RSI"
          size="h-[102px]"
          top={528}
          title={<Caption shift="-ml-px">chRSI 29.0822 81.0973</Caption>}
          axis={
            <>
              <EdgeTicks />
              <Mark at="top-px">100</Mark>
              <Mark at="top-0.5">105</Mark>
              <Mark at="top-5">78.6</Mark>
              <Mark at="top-[35px]">61.8</Mark>
              <Mark at="top-[46px]">50</Mark>
              <Mark at="top-[54px]">0</Mark>
              <Mark at="top-[57px]">38.2</Mark>
              <Mark at="top-[70px]">23.6</Mark>
              <Mark at="top-[84px]">8</Mark>
              <Mark at="top-[89px]">-5</Mark>
              <Mark at="top-[91px]">0</Mark>
              <Mark at="top-[91px]">0.00</Mark>
            </>
          }
        >
          {[534, 553, 568, 579, 590, 603, 617, 624].map((y) => (
            <Level key={y} y={y} color="#4b0082" />
          ))}
          <Level y={587} color="#daa520" />
          <Curves list={STOCH_UNDER} />
          <Series values={STOCH} color="#0000cd" width={3} />
          {STOCH_GOLD.map((v, i) => {
            const y = Math.round(INDICATOR_ORIGIN + v / 3);
            return <rect key={i} x={barX(i) - 1} y={Math.min(y, 587)} width="3" height={Math.abs(y - 587)} fill="#2f4f4f" />;
          })}
          <Series values={STOCH_GOLD} color="#ffd700" width={3} />
          <Curves list={STOCH_OVER} />
        </Panel>

        <Panel
          label="Signal"
          size="h-[135px]"
          top={631}
          title={<Caption>ner_Yur4ik -0.190</Caption>}
          axis={
            <>
              <EdgeTicks />
              <Mark at="top-0.5">1</Mark>
              <Mark at="top-[60px]">0.00</Mark>
              <Mark at="top-16">0</Mark>
              <Mark at="top-[122px]">-1.076</Mark>
            </>
          }
        >
          <Level y={700} color="#c0c0c0" />
          {HISTOGRAM.map((v, i) => {
            const y = Math.round(INDICATOR_ORIGIN + v / 3);
            return <rect key={i} x={barX(i) - 1} y={Math.min(y, 696)} width="3" height={Math.abs(y - 696)} fill={v > 828 ? "#ff0000" : "#00ff00"} />;
          })}
          <Curves list={SIGNAL_UNDER} />
          <Series values={SIGNAL_GOLD} color="#ffd700" />
          <Curves list={SIGNAL_OVER} />
        </Panel>

        <Panel label="Oscillators" size="h-[134px]" top={767}>
          <Curves list={OSC_BANDS} />
          <Series values={OSC_GREEN} color="#00ff7f" />
          <Series values={OSC_YELLOW} color="#ffff00" />
          <Series values={OSC_RED} color="#ff0000" />
          <Series values={OSC_PURPLE} color="#800080" />
        </Panel>
      </div>

      <ol className="-ml-5 flex h-5 shrink-0" aria-label="Time axis">
        {TIMES.map((t) => (
          <li key={t} className="relative w-16 shrink-0 pt-[3px] leading-3 whitespace-nowrap before:absolute before:top-0 before:left-px before:h-[3px] before:w-px before:bg-white">
            29 Mar {t}
          </li>
        ))}
      </ol>

      <div className="h-0.5 shrink-0 border-t border-[#e3e3e3] bg-white" />

      <nav aria-label="Charts" className="flex h-6 shrink-0 border-t border-black bg-[#f0f0f0] font-['Noto_Sans',sans-serif] text-[11px] leading-[14px] text-[#6d6d6d]">
        <div className="-ml-[17px] flex">
          {TABS.map((t, i) => (
            <button
              key={i}
              type="button"
              className={`${TAB_WIDTH[t]} flex shrink-0 items-start border-r pl-[10px] whitespace-nowrap ${
                t === "M5" ? "border-black bg-white text-black" : i === 15 ? "border-black" : "border-[#6d6d6d]"
              }`}
            >
              GOLD {t}
            </button>
          ))}
        </div>
        <div className="ml-auto flex gap-4 pt-1 pr-1 text-[#808080]">
          <button type="button" aria-label="Scroll tabs left" className="h-3 w-1">
            <svg viewBox="0 0 4 8" className="h-2 w-1" fill="currentColor">
              <path d="M4 0V8L0 4Z" />
            </svg>
          </button>
          <button type="button" aria-label="Scroll tabs right" className="h-3 w-1">
            <svg viewBox="0 0 4 8" className="h-2 w-1" fill="currentColor">
              <path d="M0 0V8L4 4Z" />
            </svg>
          </button>
        </div>
      </nav>

      <aside className="absolute right-20 bottom-4 flex w-[236px] flex-col gap-px whitespace-nowrap text-[#808080]">
        <p className="font-['Open_Sans',sans-serif] text-[19px] leading-6">Activate Windows</p>
        <p className="font-['Noto_Sans',sans-serif] text-sm leading-5">Go to Settings to activate Windows.</p>
      </aside>
    </main>
  );
}
